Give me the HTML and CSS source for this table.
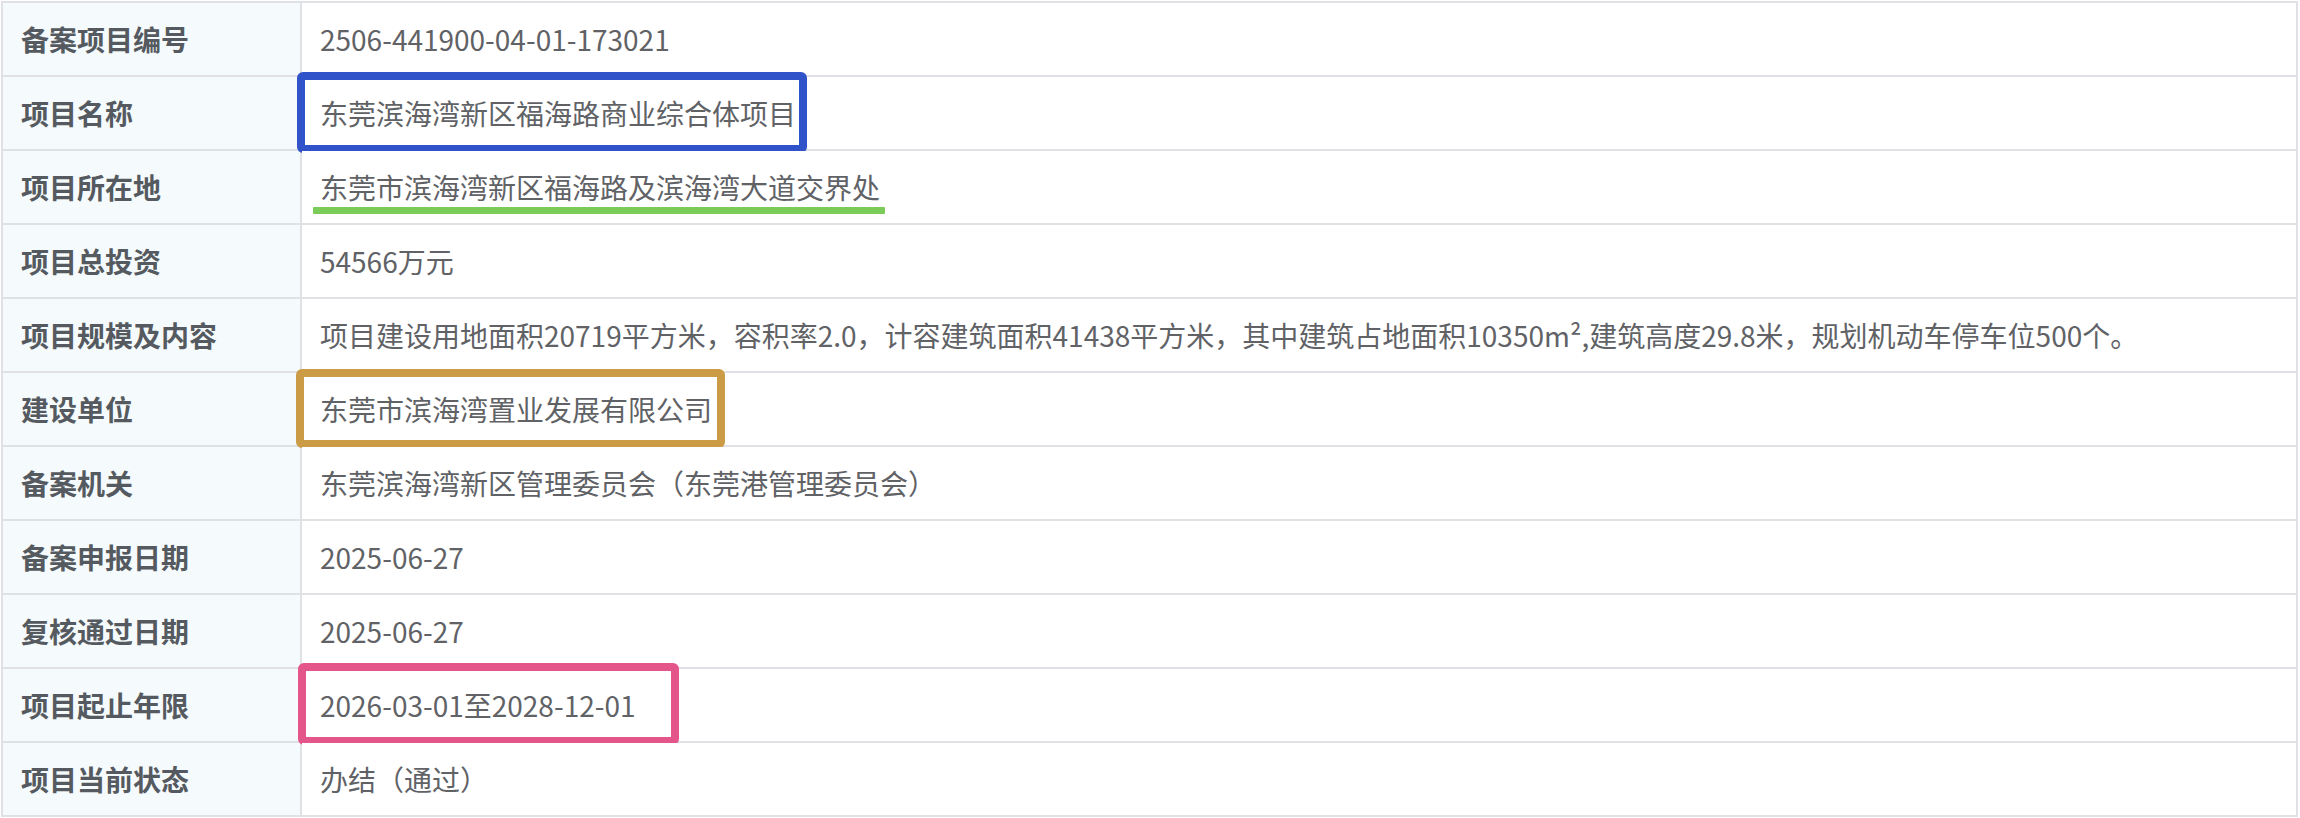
FILE: index.html
```html
<!DOCTYPE html>
<html lang="zh-CN">
<head>
<meta charset="utf-8">
<title>备案项目信息</title>
<link rel="stylesheet" href="styles.css">
</head>
<body>
<div class="table">
  <div class="lbl">备案项目编号</div>
  <div class="val">2506-441900-04-01-173021</div>

  <div class="lbl">项目名称</div>
  <div class="val">东莞滨海湾新区福海路商业综合体项目<span class="mark mark-blue"></span></div>

  <div class="lbl">项目所在地</div>
  <div class="val">东莞市滨海湾新区福海路及滨海湾大道交界处<span class="mark-line"></span></div>

  <div class="lbl">项目总投资</div>
  <div class="val">54566万元</div>

  <div class="lbl">项目规模及内容</div>
  <div class="val">项目建设用地面积20719平方米，容积率2.0，计容建筑面积41438平方米，其中建筑占地面积10350m²,建筑高度29.8米，规划机动车停车位500个。</div>

  <div class="lbl">建设单位</div>
  <div class="val">东莞市滨海湾置业发展有限公司<span class="mark mark-gold"></span></div>

  <div class="lbl">备案机关</div>
  <div class="val">东莞滨海湾新区管理委员会（东莞港管理委员会）</div>

  <div class="lbl">备案申报日期</div>
  <div class="val">2025-06-27</div>

  <div class="lbl">复核通过日期</div>
  <div class="val">2025-06-27</div>

  <div class="lbl">项目起止年限</div>
  <div class="val">2026-03-01至2028-12-01<span class="mark mark-pink"></span></div>

  <div class="lbl">项目当前状态</div>
  <div class="val">办结（通过）</div>
</div>
</body>
</html>
```

FILE: styles.css
```css
html, body {
  margin: 0;
  padding: 0;
  background: #ffffff;
}
body {
  padding: 1px 0 0 1px;
  font-family: "Noto Sans CJK SC", "Noto Sans", sans-serif;
  font-size: 28px;
}
.table {
  width: 2297px;
  box-sizing: border-box;
  display: grid;
  grid-template-columns: 297px 1fr;
  grid-auto-rows: 72px;
  gap: 2px;
  padding: 2px;
  background: #dfe1e4;
}
.lbl, .val {
  display: flex;
  align-items: center;
  padding-left: 18px;
  white-space: nowrap;
}
.lbl {
  background: #f5fbfd;
  color: #555a60;
  font-weight: 700;
}
.val {
  background: #ffffff;
  color: #606266;
  position: relative;
}
.mark {
  position: absolute;
  box-sizing: border-box;
  border: 8px solid;
  border-radius: 6px;
  pointer-events: none;
}
.mark-blue {
  border-color: #3153c9;
  left: -5px;
  top: -5px;
  width: 510px;
  height: 81px;
}
.mark-gold {
  border-color: #cb9b46;
  left: -6px;
  top: -4px;
  width: 429px;
  height: 79px;
}
.mark-pink {
  border-color: #e4568a;
  left: -4px;
  top: -6px;
  width: 381px;
  height: 82px;
}
.mark-line {
  position: absolute;
  left: 11px;
  top: 56px;
  width: 572px;
  height: 7px;
  background: #7acb58;
  border-radius: 1px;
}
```
